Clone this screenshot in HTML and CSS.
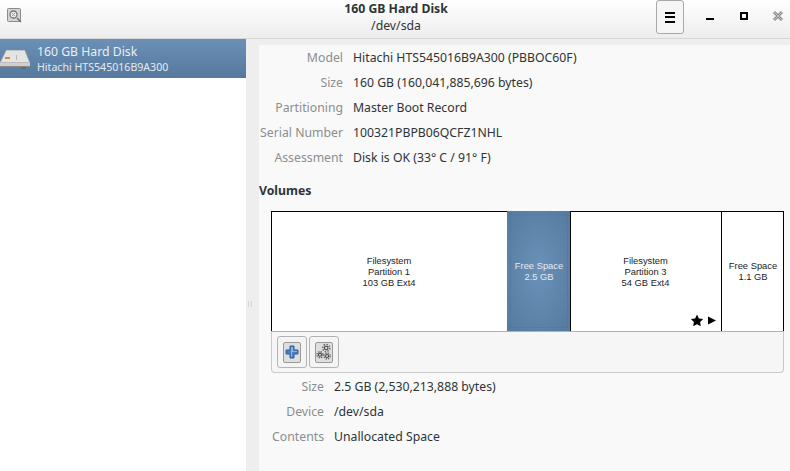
FILE: index.html
```html
<!DOCTYPE html>
<html lang="en">
<head>
<meta charset="utf-8">
<title>Disks</title>
<link rel="stylesheet" href="styles.css">
</head>
<body>
<div class="window">
  <header class="titlebar">
    <div class="app-icon">
      <svg width="16" height="16" viewBox="0 0 16 16"><rect x=".5" y=".5" width="13" height="13" rx="1" fill="#d4d4d4" stroke="#8a8a8a"/><circle cx="6.500" cy="6.500" r="3.500" fill="#eee" stroke="#777" stroke-width="1.300"/><path d="M5 5l3 3M8 5l-3 3" stroke="#999"/><path d="M10 10l4 4" stroke="#666" stroke-width="1.300"/></svg>
    </div>
    <div class="title-block">
      <div class="title">160 GB Hard Disk</div>
      <div class="subtitle">/dev/sda</div>
    </div>
    <div class="controls">
      <button class="menu-btn" aria-label="Menu"><span></span><span></span><span></span></button>
      <span class="win-btn"><i class="min"></i></span>
      <span class="win-btn"><i class="max"></i></span>
      <span class="win-btn close">
        <svg width="12" height="12" viewBox="0 0 12 12"><path d="M2 2l8 8M10 2l-8 8" stroke="#8c8c8c" stroke-width="3"/><path d="M2 2l8 8M10 2l-8 8" stroke="#c4c4c4" stroke-width="1"/></svg>
      </span>
    </div>
  </header>
  <div class="body">
    <aside class="sidebar">
      <div class="disk-row">
        <svg class="disk-icon" width="31" height="24" viewBox="0 0 31 24"><path d="M6 3h19l5 12v5H0v-5z" fill="#a9a9a9"/><path d="M6.500 3.500h18L29 15H1z" fill="#e4e4e4"/><path d="M0 15.500h30V20H0z" fill="#cfcfcf"/><path d="M0 19h30v1H0z" fill="#8a8a8a"/><rect x="5" y="10" width="5" height="2" fill="#d98a3e"/><rect x="16" y="8" width="1" height="5" fill="#b8b8b8"/><rect x="21" y="20" width="5" height="1.500" fill="#666"/></svg>
        <div class="disk-text">
          <div class="disk-name">160 GB Hard Disk</div>
          <div class="disk-model">Hitachi HTS545016B9A300</div>
        </div>
      </div>
    </aside>
    <div class="gutter"><span class="grip"></span></div>
    <main class="content">
      <dl class="info info-top">
        <dt>Model</dt><dd>Hitachi HTS545016B9A300 (PBBOC60F)</dd>
        <dt>Size</dt><dd>160 GB (160,041,885,696 bytes)</dd>
        <dt>Partitioning</dt><dd>Master Boot Record</dd>
        <dt>Serial Number</dt><dd>100321PBPB06QCFZ1NHL</dd>
        <dt>Assessment</dt><dd>Disk is OK (33° C / 91° F)</dd>
      </dl>
      <h2 class="volumes-title">Volumes</h2>
      <div class="volumes">
        <div class="bar">
          <div class="part p1"><div>Filesystem</div><div>Partition 1</div><div>103 GB Ext4</div></div>
          <div class="part p2 selected"><div>Free Space</div><div>2.5 GB</div></div>
          <div class="part p3"><div>Filesystem</div><div>Partition 3</div><div>54 GB Ext4</div>
            <div class="badges">
              <svg width="14" height="13" viewBox="0 0 13 13"><path d="M6.500 .5l1.900 3.900 4.200.6-3 3 .7 4.300-3.800-2-3.800 2 .7-4.300-3-3 4.200-.6z" fill="#000"/></svg>
              <svg width="8" height="9" viewBox="0 0 8 9"><path d="M0 .5l8 4-8 4z" fill="#000"/></svg>
            </div>
          </div>
          <div class="part p4"><div>Free Space</div><div>1.1 GB</div></div>
        </div>
        <div class="toolbar">
          <button class="tool" aria-label="Add">
            <span class="tool-face">
              <svg width="16" height="16" viewBox="0 0 16 16"><path d="M6 2h4v4h4v4h-4v4H6v-4H2V6h4z" fill="#4a80c0" stroke="#2f5d96"/><path d="M7 3h2v4h4v1H8v5H7z" fill="#8db4e0"/></svg>
            </span>
          </button>
          <button class="tool" aria-label="Settings">
            <span class="tool-face">
              <svg width="18" height="20" viewBox="0 0 18 20" fill="none" stroke="#444"><circle cx="11.500" cy="5.500" r="2" stroke-width="1.300"/><circle cx="11.500" cy="5.500" r="4" stroke-dasharray="1.600 1.500" stroke-width="1.800" stroke="#666"/><circle cx="4.500" cy="13" r="1.700" stroke-width="1.200"/><circle cx="4.500" cy="13" r="3.400" stroke-dasharray="1.500 1.200" stroke-width="1.600" stroke="#666"/><circle cx="12.500" cy="14.500" r="1.700" stroke-width="1.200"/><circle cx="12.500" cy="14.500" r="3.400" stroke-dasharray="1.500 1.200" stroke-width="1.600" stroke="#666"/></svg>
            </span>
          </button>
        </div>
      </div>
      <dl class="info info-bottom">
        <dt>Size</dt><dd>2.5 GB (2,530,213,888 bytes)</dd>
        <dt>Device</dt><dd>/dev/sda</dd>
        <dt>Contents</dt><dd>Unallocated Space</dd>
      </dl>
    </main>
  </div>
</div>
</body>
</html>
```
FILE: styles.css
```css
* { box-sizing: border-box; }
html, body { margin: 0; height: 100%; overflow: hidden; }
body { font-family: "Noto Sans", sans-serif; font-size: 12.25px; color: #2e3436; background: #eee; }
.window { width: 790px; height: 471px; display: flex; flex-direction: column; }

.titlebar { height: 39px; flex: none; display: flex; align-items: center; position: relative; background: linear-gradient(#ffffff, #ededed); border-bottom: 1px solid #d6d6d6; }
.app-icon { width: 16px; height: 16px; margin-left: 7px; margin-top: -6px; line-height: 0; }
.title-block { position: absolute; left: 0; right: 0; top: 0; text-align: center; line-height: 16px; padding-left: 2px; }
.title { font-weight: 700; font-size: 12.25px; color: #2e3436; height: 17px; padding-top: 1px; }
.subtitle { font-size: 12.25px; color: #2e3436; height: 18px; padding-top: 1px; }
.controls { margin-left: auto; display: flex; align-items: flex-start; height: 38px; position: relative; }
.menu-btn { width: 28px; height: 34px; padding: 0; display: flex; flex-direction: column; align-items: center; justify-content: center; gap: 2.5px; background: #f6f6f6; border: 1px solid #a9a9a9; border-radius: 3px; margin-right: 9px; }
.menu-btn span { width: 10px; height: 2px; background: #000; display: block; }
.win-btn { width: 34px; height: 32px; display: flex; align-items: center; justify-content: center; }
.win-btn.close { width: 24px; margin-left: 5px; }
.win-btn .min { width: 8px; height: 2px; background: #000; margin-top: 5px; }
.win-btn .max { width: 8px; height: 8px; border: 2px solid #000; }

.body { flex: 1; display: flex; min-height: 0; }
.sidebar { width: 246px; flex: none; background: #fff; }
.disk-row { height: 39px; display: flex; align-items: center; color: #fff; background: linear-gradient(#6b90b6, #56789d); }
.disk-icon { flex: none; margin-right: 6px; }
.disk-name { font-size: 12.25px; line-height: 16px; color: #e9eff6; }
.disk-model { font-size: 10.6px; line-height: 14px; color: #e3ebf3; }
.gutter { width: 13px; flex: none; position: relative; background: #eeeeee; }
.grip { position: absolute; left: 2px; top: 262px; width: 4px; height: 6px; border-left: 1px solid #d8d8d8; border-right: 1px solid #d8d8d8; }

.content { flex: 1; margin-top: 6px; background: #f9f9f9; min-width: 0; }
.info { margin: 0; display: grid; grid-auto-rows: 25px; align-items: center; column-gap: 10px; }
.info dt { color: #8b8e8f; text-align: right; white-space: nowrap; }
.info dd { margin: 0; color: #2e3436; }
.info-top { grid-template-columns: 84px 1fr; }
.info-bottom { grid-template-columns: 65px 1fr; padding-top: 1px; }
.volumes-title { margin: 12px 0 0; font-size: 12.25px; line-height: 18px; font-weight: 700; color: #2e3436; height: 29px; }
.volumes { margin-left: 12px; margin-right: 6px; }
.bar { display: flex; height: 120px; border-top: 1px solid #000; border-left: 1px solid #000; border-right: 1px solid #000; background: #fff; }
.part { display: flex; flex-direction: column; align-items: center; justify-content: center; font-family: "Liberation Sans", sans-serif; font-size: 9.35px; line-height: 11px; color: #1c1c1c; position: relative; padding-top: 1px; }
.p1 { width: 235px; padding-right: 1px; }
.p2 { width: 64px; border-right: 1px solid #000; color: #e3ebf3; background: radial-gradient(ellipse at center, #6a91b8, #557a9f); outline: 1px dotted #4f7397; outline-offset: -4px; margin-top: -1px; padding-left: 1px; }
.p3 { width: 151px; border-right: 1px solid #000; padding-right: 1px; }
.p4 { flex: 1; padding-left: 1px; }
.badges { position: absolute; right: 5px; bottom: 4px; display: flex; align-items: center; gap: 4px; }
.toolbar { height: 42px; background: #f6f6f6; border: 1px solid #c9c9c9; border-top: 1px solid #b0b0b0; border-radius: 0 0 4px 4px; display: flex; align-items: center; padding-left: 5px; gap: 2px; }
.tool { width: 30px; height: 32px; padding: 0; background: #f4f4f4; border: 1px solid #b4b4b4; border-radius: 3px; display: flex; align-items: center; justify-content: center; }
.tool-face { width: 18px; height: 21px; display: flex; align-items: center; justify-content: center; border: 1px solid #9a9a9a; border-radius: 2px; background: #dedede; }
```
